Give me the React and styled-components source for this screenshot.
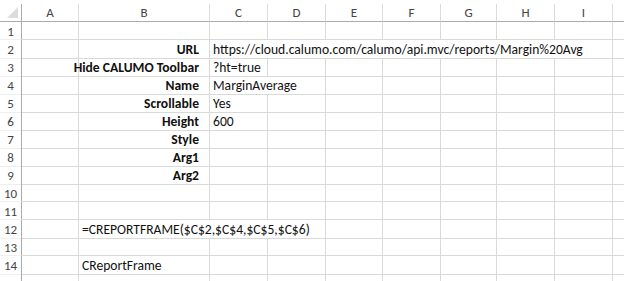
import React from "react";
import styled, { createGlobalStyle } from "styled-components";

const GlobalStyle = createGlobalStyle`
  html, body {
    margin: 0;
    padding: 0;
    background: #fff;
    overflow: hidden;
  }
`;

const COLS = [22, 57, 131, 58, 58, 57, 58, 56, 58, 58, 40];
const LETTERS = ["A", "B", "C", "D", "E", "F", "G", "H", "I", "J"];
const template = COLS.map(w => `${w}px`).join(" ");

const Sheet = styled.div`
  padding-top: 4px;
  width: 624px;
  height: 281px;
  overflow: hidden;
  box-sizing: border-box;
  font-family: "Carlito", "Lato", "Liberation Sans", sans-serif;
  font-size: 13.6px;
  color: #111;
`;

const Row = styled.div`
  display: grid;
  grid-template-columns: ${template};
  height: 18px;
`;

const Corner = styled.div`
  position: relative;
  box-sizing: border-box;
  border-right: 1px solid #ababab;
  border-bottom: 1px solid #ababab;
  &::after {
    content: "";
    position: absolute;
    right: 3px;
    bottom: 3px;
    width: 0;
    height: 0;
    border-left: 11px solid transparent;
    border-bottom: 11px solid #dcdcdc;
  }
`;

const ColHead = styled.div`
  box-sizing: border-box;
  border-right: 1px solid #dcdcdc;
  border-bottom: 1px solid #ababab;
  color: #444;
  font-size: 13px;
  display: flex;
  align-items: center;
  justify-content: center;
`;

const RowHead = styled.div`
  box-sizing: border-box;
  border-right: 1px solid #ababab;
  border-bottom: 1px solid #efefef;
  color: #444;
  font-size: 13px;
  padding-top: 1px;
  display: flex;
  align-items: center;
  justify-content: center;
`;

const Cell = styled.div`
  box-sizing: border-box;
  border-right: 1px solid ${p => (p.$spill ? "transparent" : "#d9d9d9")};
  border-bottom: 1px solid #d9d9d9;
  display: flex;
  align-items: center;
  justify-content: ${p => (p.$right ? "flex-end" : "flex-start")};
  padding: ${p => (p.$right ? "1px 10px 0 0" : "1px 0 0 3px")};
  font-weight: ${p => (p.$bold ? 700 : 400)};
  white-space: nowrap;
  overflow: visible;
  min-width: 0;
`;

const rows = [
  {},
  { b: "URL", c: "https://cloud.calumo.com/calumo/api.mvc/reports/Margin%20Avg", spill: [3, 4, 5, 6, 7, 8] },
  { b: "Hide CALUMO Toolbar", c: "?ht=true" },
  { b: "Name", c: "MarginAverage", spill: [3] },
  { b: "Scrollable", c: "Yes" },
  { b: "Height", c: "600" },
  { b: "Style" },
  { b: "Arg1" },
  { b: "Arg2" },
  {},
  {},
  { formula: "=CREPORTFRAME($C$2,$C$4,$C$5,$C$6)", spill: [2, 3] },
  {},
  { formula: "CReportFrame" },
  { hidden: true },
];

const App = () => (
  <>
    <GlobalStyle />
    <Sheet>
      <Row>
        <Corner />
        {LETTERS.map(l => (
          <ColHead key={l}>{l === "J" ? null : l}</ColHead>
        ))}
      </Row>
      {rows.map((r, i) => {
        const spill = r.spill || [];
        return (
          <Row key={i}>
            <RowHead>{r.hidden ? null : i + 1}</RowHead>
            {LETTERS.map((l, j) => {
              const col = j + 1;
              let content = null;
              let right = false;
              let bold = false;
              if (col === 2 && r.b) {
                content = r.b;
                right = true;
                bold = true;
              } else if (col === 2 && r.formula) {
                content = r.formula;
              } else if (col === 3 && r.c) {
                content = r.c;
              }
              return (
                <Cell key={l} $right={right} $bold={bold} $spill={spill.includes(col)}>
                  {content}
                </Cell>
              );
            })}
          </Row>
        );
      })}
    </Sheet>
  </>
);

export default App;
